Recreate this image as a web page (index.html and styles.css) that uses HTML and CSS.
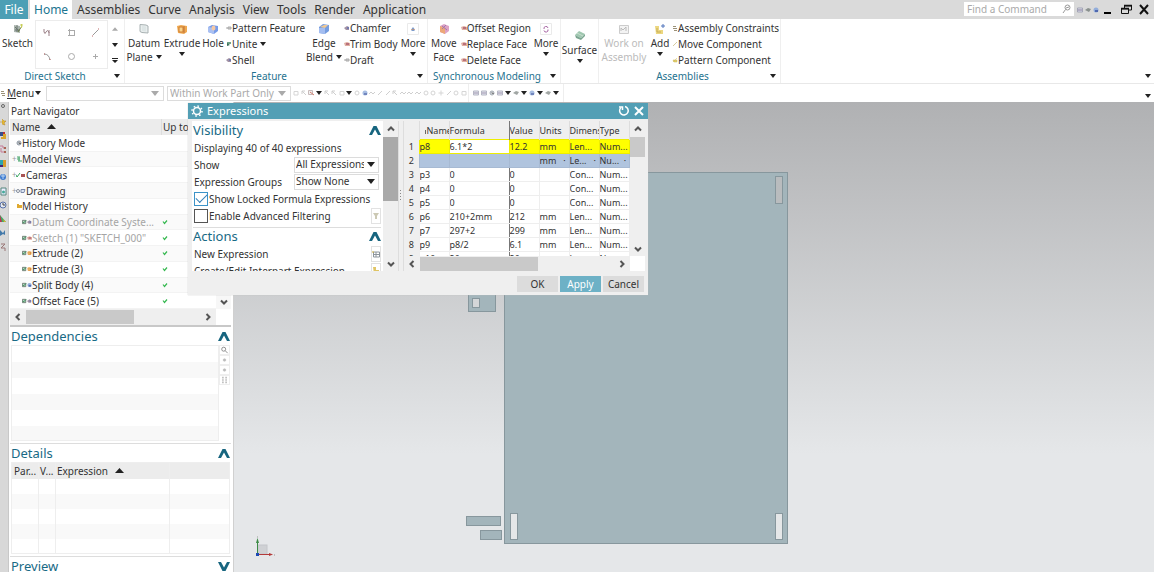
FILE: index.html
```html
<!DOCTYPE html>
<html lang="en">
<head>
<meta charset="utf-8">
<title>Part modeling</title>
<link rel="stylesheet" href="styles.css">
</head>
<body>
<svg class="defs" aria-hidden="true">
  <symbol id="down" viewBox="0 0 6 4"><path d="M0 0h6L3 4z"/></symbol>
  <symbol id="up" viewBox="0 0 9 5"><path d="M0 5h9L4.500 0z"/></symbol>
  <symbol id="chev" viewBox="0 0 12 9"><path d="M0 9L4.500 0h3L12 9H9L6 3.500 3 9z"/></symbol>
  <symbol id="arr" viewBox="0 0 8 8"><path d="M1 5.500L4 2.500l3 3" fill="none" stroke="#555" stroke-width="2"/></symbol>
  <symbol id="sketch" viewBox="0 0 12 12"><path d="M2 2l6 1v7l-6-1z" fill="#aab4ae"/><path d="M3 4l4 4M3 7h5M5 2v7" stroke="#6b7770"/><path d="M6 9l4-6" stroke="#6d7f4a"/><path d="M8 2h3M9.500 1v4" stroke="#c9cf5a"/></symbol>
  <symbol id="plane" viewBox="0 0 12 12"><path d="M2 1.500l6 .5 2 1v7l-6-.5-2-1z" fill="#e9eeee" stroke="#a8b1b2"/><path d="M4 3l4 .5v5l-4-.5z" fill="#dde5e5"/></symbol>
  <symbol id="extrude" viewBox="0 0 12 12"><path d="M1 3l4-1 6 1v6l-3 2-6-1z" fill="#f0a950"/><path d="M3 4h4v5H3z" fill="#f9d48c" stroke="#cf7f33"/><path d="M8 3v7" stroke="#ba7138"/></symbol>
  <symbol id="hole" viewBox="0 0 12 12"><path d="M1 4l4-2 6 1v5l-4 3-6-2z" fill="#789ce8"/><path d="M1 4l6 1v6l-6-2z" fill="#a9c0f2"/><ellipse cx="6.500" cy="5" rx="2" ry="2.500" fill="#f5c8a4"/></symbol>
  <symbol id="blend" viewBox="0 0 12 12"><path d="M1 4l4-3 6 1v6l-4 3-6-1z" fill="#769ddf"/><path d="M1 5h6v6l-6-1z" fill="#a3bdf0"/><path d="M2 4l4-2h4L7 5z" fill="#f0c893"/></symbol>
  <symbol id="face" viewBox="0 0 12 12"><path d="M2 3l4-2 5 2v5l-4 3-5-2z" fill="#dda3c5"/><path d="M2 3l5 2v6l-5-2z" fill="#eda878"/><path d="M4 6l4-4M4 3l5 4" stroke="#a476ad"/></symbol>
  <symbol id="more1" viewBox="0 0 12 12"><path d="M.5.500h11v11H.5z" fill="#fff" stroke="#eaeaea"/><path d="M4.500 6l1.500-2 1.500 2v2h-3z" fill="#7d9ccc"/><path d="M4 6.500h4" stroke="#c98f6a" stroke-width=".6"/></symbol>
  <symbol id="more2" viewBox="0 0 12 12"><path d="M.5.500h11v11H.5z" fill="#fff" stroke="#eaeaea"/><path d="M4 6a2 2 0 0 1 4-1M8 6.500a2 2 0 0 1-4 1" fill="none" stroke="#a765a4"/></symbol>
  <symbol id="surface" viewBox="0 0 12 12"><path d="M1 5l4-4 6 3-4 4z" fill="#9fc7b0"/><path d="M1 5l6 3 4-4v2l-4 4-5-2z" fill="#7ba590"/><path d="M3 3l6 3" stroke="#c7dfcf"/></symbol>
  <symbol id="work" viewBox="0 0 12 12"><path d="M1.500 2.500h9v8h-9z" fill="#f3f3f3" stroke="#ccc"/><path d="M3 8V5l2 2 3-3v4" fill="none" stroke="#bbb"/></symbol>
  <symbol id="add" viewBox="0 0 12 12"><path d="M1 3h4v4h4v4H2z" fill="#ecd780"/><path d="M3 5v4h4" fill="none" stroke="#c5ac5b"/><path d="M7 3h4M9 1v4" stroke="#5277bd"/></symbol>
  <symbol id="s-gray" viewBox="0 0 6 6"><path d="M0 3h2M2 2h3v2H2z" stroke="#aaa" fill="#ccc"/></symbol>
  <symbol id="s-green" viewBox="0 0 6 6"><path d="M1 1h4v2H1z" fill="#6fa287"/><path d="M1 2v3l3-1" fill="#376e59"/></symbol>
  <symbol id="s-shell" viewBox="0 0 6 6"><path d="M0 3l3-2 2 1v3H2z" fill="#a191a4"/><path d="M3 2h2v2H3z" fill="#7379ad"/></symbol>
  <symbol id="s-red" viewBox="0 0 6 6"><path d="M0 2l3-1 3 1v3H1z" fill="#dfaea1"/><path d="M2 2h3v2H2z" fill="#b8707b"/></symbol>
  <symbol id="s-blue" viewBox="0 0 6 6"><circle cx="3" cy="3" r="2.500" fill="#92addb"/><path d="M2 3h3v2H2z" fill="#5068af"/></symbol>
  <symbol id="s-gold" viewBox="0 0 6 6"><path d="M1 5l3-3 1-1M1 3h4v2H2z" fill="#e5d16c" stroke="#cbb65b" stroke-width=".5"/></symbol>
  <symbol id="s-eq" viewBox="0 0 6 6"><path d="M1 1.500h3M1 3.500h4M2 5.500h3" stroke="#9a9178"/></symbol>
  <symbol id="s-pen" viewBox="0 0 6 6"><path d="M1 5l4-4" stroke="#d5cba0"/></symbol>
  <symbol id="s-clock" viewBox="0 0 6 6"><circle cx="3" cy="3" r="2" fill="#d3dae2" stroke="#8b939e"/><path d="M3 2v1.500h2" fill="none" stroke="#666"/></symbol>
  <symbol id="s-view" viewBox="0 0 6 6"><path d="M1 1h3M1 3h3M2 5h4M3 1v4" stroke="#45a469"/></symbol>
  <symbol id="s-cam" viewBox="0 0 10 6"><path d="M0 3l1 2 3-4" fill="none" stroke="#36a35a"/><path d="M5 2h4v3H5z" fill="#a85454"/></symbol>
  <symbol id="s-draw" viewBox="0 0 10 6"><circle cx="2" cy="3" r="1.500" fill="none" stroke="#858d9b"/><path d="M5 1.500h4l-1 3H5z" fill="#dce6f4" stroke="#7c8aa9"/></symbol>
  <symbol id="s-folder" viewBox="0 0 6 6"><path d="M1 1h2v1h3v3H1z" fill="#e0aa31"/></symbol>
  <symbol id="t-box" viewBox="0 0 6 6"><path d="M.5 1h4v4h-4z" fill="#b4d4bf" stroke="#64746a"/><path d="M1 3l1 1 3-3" fill="none" stroke="#25874a"/></symbol>
  <symbol id="tick" viewBox="0 0 6 6"><path d="M1 2.500l1.500 2 2.500-3" fill="none" stroke="#35b84f" stroke-width="1.200"/></symbol>
  <symbol id="m-arrow" viewBox="0 0 6 6"><path d="M1 1l4 4M1 1h3M1 1v3" fill="none" stroke="#c4c4c4"/></symbol>
  <symbol id="m-line" viewBox="0 0 6 6"><path d="M1 5l4-4" stroke="#c4c4c4"/></symbol>
  <symbol id="m-sq" viewBox="0 0 6 6"><path d="M1 1.500h4v3.500H1z" fill="none" stroke="#ccc"/></symbol>
  <symbol id="m-circ" viewBox="0 0 6 6"><circle cx="3" cy="3" r="2" fill="none" stroke="#ccc"/></symbol>
  <symbol id="m-plus" viewBox="0 0 6 6"><path d="M3 .5v5M.5 3h5" stroke="#ccc"/></symbol>
  <symbol id="m-wave" viewBox="0 0 6 6"><path d="M0 4l2-2 2 2 2-2" fill="none" stroke="#c4c4c4"/></symbol>
  <symbol id="m-redbox" viewBox="0 0 6 6"><path d="M.5.500h4v4h-4z" fill="#eee" stroke="#baa"/><path d="M2 2l4 3" stroke="#ca604e"/></symbol>
  <symbol id="m-win" viewBox="0 0 6 6"><path d="M.5 1h5v4h-5z" fill="#dce0eb" stroke="#a3a5b6"/><path d="M1 3h4" stroke="#87799a"/></symbol>
  <symbol id="m-dark" viewBox="0 0 6 6"><path d="M0 3l3-2 3 1-2 3z" fill="#8a918e"/></symbol>
</svg>

<header class="tabs">
  <nav class="tablist">
    <button class="tab file">File</button><button class="tab home">Home</button><button class="tab">Assemblies</button><button class="tab">Curve</button><button class="tab">Analysis</button><button class="tab">View</button><button class="tab">Tools</button><button class="tab">Render</button><button class="tab">Application</button>
  </nav>
  <label class="search"><input type="search" placeholder="Find a Command" aria-label="Find a Command">
    <svg width="9" height="10" viewBox="0 0 9 10" fill="none" stroke="#999"><circle cx="5.500" cy="3.500" r="2.500"/><path d="M3.500 5.500L1 9M4 4l3-1"/></svg></label>
  <div class="status"><svg width="6" height="6"><use href="#m-win"/></svg><svg width="6" height="6"><use href="#m-dark"/></svg><svg width="6" height="6"><use href="#s-blue"/></svg></div>
  <div class="winbtns">
    <button aria-label="Minimize"><svg width="11" height="11" viewBox="0 0 11 11"><path d="M1 8h7v2H1z"/></svg></button>
    <button aria-label="Restore"><svg width="11" height="11" viewBox="0 0 11 11" fill="none" stroke="#111"><path d="M3.500 4V2h7v4H8M.5 5h7v4.500h-7z"/><path d="M3 1.500h8M0 4.500h8" stroke-width="1.500"/></svg></button>
    <button aria-label="Close"><svg width="11" height="11" viewBox="0 0 11 11" stroke="#111" stroke-width="2"><path d="M1 1l8 9M9 1l-8 9"/></svg></button>
  </div>
</header>

<section class="ribbon">
  <div class="group g-sketch">
    <div class="tools">
      <button class="big w35"><svg class="ic"><use href="#sketch"/></svg>Sketch</button>
      <div class="gallery">
        <button aria-label="Profile"><svg viewBox="0 0 9 9"><path d="M1 1v3q1 3 2 0t3 0v4M6 2v3" fill="none" stroke="#9a7f86"/></svg></button>
        <button aria-label="Rectangle"><svg viewBox="0 0 9 9"><path d="M1 2.500h7M1 7.500h7M2.500 1v7M7.500 2v6" fill="none" stroke="#aaa"/></svg></button>
        <button aria-label="Line"><svg viewBox="0 0 9 9"><path d="M2 7l5-5" stroke="#999"/><path d="M1 8h1M7 1h1" stroke="#b66"/></svg></button>
        <button aria-label="Arc"><svg viewBox="0 0 9 9"><path d="M1 2q5 0 6 6" fill="none" stroke="#999"/><path d="M1 2h1M7 7v1" stroke="#b66"/></svg></button>
        <button aria-label="Circle"><svg viewBox="0 0 9 9"><circle cx="4.500" cy="4.500" r="3" fill="none" stroke="#aaa"/></svg></button>
        <button aria-label="Point"><svg viewBox="0 0 9 9"><path d="M4.500 2v5M2 4.500h5" stroke="#aaa"/></svg></button>
      </div>
      <div class="spin"><svg class="dn faint"><use href="#up"/></svg><svg class="dn"><use href="#down"/></svg><svg class="dn bar-dn" viewBox="0 0 6 5"><path d="M0 0h6v1H0zM0 2h6L3 5z"/></svg></div>
    </div>
    <div class="foot"><span>Direct Sketch</span><svg class="dn"><use href="#down"/></svg></div>
  </div>

  <div class="group g-feature">
    <div class="tools">
      <button class="big w38"><svg class="ic"><use href="#plane"/></svg>Datum<span>Plane <svg class="dn"><use href="#down"/></svg></span></button>
      <button class="big w38"><svg class="ic"><use href="#extrude"/></svg>Extrude<svg class="dn"><use href="#down"/></svg></button>
      <button class="big w24"><svg class="ic"><use href="#hole"/></svg>Hole</button>
      <div class="list w80">
        <button><svg class="si"><use href="#s-gray"/></svg>Pattern Feature</button>
        <button><svg class="si"><use href="#s-green"/></svg>Unite <svg class="dn"><use href="#down"/></svg></button>
        <button><svg class="si"><use href="#s-shell"/></svg>Shell</button>
      </div>
      <button class="big w38"><svg class="ic"><use href="#blend"/></svg>Edge<span>Blend <svg class="dn"><use href="#down"/></svg></span></button>
      <div class="list w56">
        <button><svg class="si"><use href="#s-shell"/></svg>Chamfer</button>
        <button><svg class="si"><use href="#s-red"/></svg>Trim Body</button>
        <button><svg class="si"><use href="#s-gray"/></svg>Draft</button>
      </div>
      <button class="big w28"><svg class="ic"><use href="#more1"/></svg>More<svg class="dn"><use href="#down"/></svg></button>
    </div>
    <div class="foot"><span>Feature</span><svg class="dn"><use href="#down"/></svg></div>
  </div>

  <div class="group g-sync">
    <div class="tools">
      <button class="big w32"><svg class="ic"><use href="#face"/></svg>Move<span>Face</span></button>
      <div class="list w73">
        <button><svg class="si"><use href="#s-red"/></svg>Offset Region</button>
        <button><svg class="si"><use href="#s-red"/></svg>Replace Face</button>
        <button><svg class="si"><use href="#s-red"/></svg>Delete Face</button>
      </div>
      <button class="big w28"><svg class="ic"><use href="#more2"/></svg>More<svg class="dn"><use href="#down"/></svg></button>
    </div>
    <div class="foot"><span>Synchronous Modeling</span><svg class="dn"><use href="#down"/></svg></div>
  </div>

  <div class="group g-surface">
    <button class="big low"><svg class="ic"><use href="#surface"/></svg>Surface<svg class="dn"><use href="#down"/></svg></button>
  </div>

  <div class="group g-asm">
    <div class="tools">
      <button class="big w50" disabled><svg class="ic"><use href="#work"/></svg>Work on<span>Assembly</span></button>
      <button class="big w22"><svg class="ic"><use href="#add"/></svg>Add<svg class="dn"><use href="#down"/></svg></button>
      <div class="list w108">
        <button><svg class="si"><use href="#s-eq"/></svg>Assembly Constraints</button>
        <button><svg class="si"><use href="#s-pen"/></svg>Move Component</button>
        <button><svg class="si"><use href="#s-gold"/></svg>Pattern Component</button>
      </div>
    </div>
    <div class="foot"><span>Assemblies</span><svg class="dn"><use href="#down"/></svg></div>
  </div>
  <button class="more-end" aria-label="Ribbon options"><svg class="dn"><use href="#down"/></svg></button>
</section>

<section class="bar">
  <button class="menu"><svg class="si"><use href="#s-eq"/></svg><span><u>M</u>enu</span><svg class="dn"><use href="#down"/></svg></button>
  <div class="combo c1"><select aria-label="Type filter" disabled><option></option></select></div>
  <div class="combo c2"><select aria-label="Selection scope" disabled><option>Within Work Part Only</option></select></div>
  <div class="minis m1">
    <svg><use href="#m-sq"/></svg><svg><use href="#m-arrow"/></svg><svg><use href="#m-redbox"/></svg><svg class="k"><use href="#down"/></svg><svg><use href="#m-arrow"/></svg><svg><use href="#m-arrow"/></svg><svg><use href="#m-sq"/></svg><svg class="k"><use href="#down"/></svg><svg><use href="#m-circ"/></svg><svg><use href="#s-blue"/></svg><svg><use href="#m-wave"/></svg><svg><use href="#m-line"/></svg><svg><use href="#m-line"/></svg><svg><use href="#m-arrow"/></svg><svg><use href="#m-wave"/></svg><svg><use href="#m-wave"/></svg><svg><use href="#m-wave"/></svg><svg><use href="#m-circ"/></svg><svg><use href="#m-circ"/></svg><svg><use href="#m-plus"/></svg><svg><use href="#m-line"/></svg><svg><use href="#m-circ"/></svg><svg><use href="#m-sq"/></svg>
  </div>
  <div class="minis m2">
    <svg><use href="#m-win"/></svg><svg><use href="#m-win"/></svg><svg><use href="#s-clock"/></svg><svg><use href="#m-win"/></svg><svg class="k"><use href="#down"/></svg><svg><use href="#m-dark"/></svg><svg class="k"><use href="#down"/></svg><svg><use href="#s-blue"/></svg><svg class="k"><use href="#down"/></svg><svg><use href="#m-dark"/></svg><svg class="k"><use href="#down"/></svg>
  </div>
  <button class="more-end" aria-label="Toolbar options"><svg class="dn"><use href="#down"/></svg></button>
</section>

<main class="work">
  <nav class="rail" aria-label="Resource bar">
    <svg viewBox="0 0 9 10"><circle cx="3" cy="4" r="1.500" fill="none" stroke="#666"/></svg>
    <svg viewBox="0 0 9 10"><path d="M0 6h3M2 3l2 2 2 0-2 2 1 2-3-1" fill="#e5b934" stroke="#b88d31" stroke-width=".6"/></svg>
    <svg viewBox="0 0 9 10"><path d="M0 2h3v4H0z" fill="#35508f"/><path d="M3 4h3v5H1V7h2z" fill="#d8a52d"/><path d="M3 2h2v2H3z" fill="#b33"/></svg>
    <svg viewBox="0 0 9 10"><path d="M0 2h3v2h3M1 4v4h5" fill="none" stroke="#c47b97"/><path d="M4 3h2v2H4zM4 7h2v2H4z" fill="#a65"/></svg>
    <svg viewBox="0 0 9 10"><path d="M0 2h3v7H0z" fill="#2ba6b0"/><path d="M3 2h3v7H3z" fill="#d59c2c"/><path d="M0 7h3v2H0z" fill="#427"/></svg>
    <svg viewBox="0 0 9 10"><circle cx="3" cy="5" r="3" fill="#3d7bd0"/><path d="M1 4h4M3 2v5" stroke="#b9d4f1"/></svg>
    <svg viewBox="0 0 9 10"><path d="M1 2h5v7H1z" fill="#eef" stroke="#57877f"/><circle cx="3.500" cy="6" r="1.500" fill="#4a9"/></svg>
    <svg viewBox="0 0 9 10"><circle cx="3" cy="5" r="3" fill="#e4e9f2" stroke="#5771a8"/><path d="M3 3v2h2" fill="none" stroke="#444"/></svg>
    <svg viewBox="0 0 9 10"><path d="M0 1l6 7H0z" fill="#4a6"/><path d="M0 1l2 7H0z" fill="#b35"/><path d="M3 5l3 3H4z" fill="#e1b02b"/></svg>
    <svg viewBox="0 0 9 10"><path d="M0 2l3 3 2-3v5L3 6 0 8z" fill="#4379a9"/></svg>
    <svg viewBox="0 0 9 10"><path d="M1 2h4L1 6h4v3" fill="none" stroke="#9a7776"/></svg>
  </nav>

  <aside class="panel">
    <div class="ptitle">Part Navigator</div>
    <div class="nav">
      <div class="phead"><span>Name <svg class="sort"><use href="#up"/></svg></span><span>Up to</span></div>
      <ul class="tree">
        <li><span class="n"><svg class="si"><use href="#s-clock"/></svg>History Mode</span><span></span></li>
        <li><span class="n p"><svg class="si"><use href="#s-view"/></svg>Model Views</span><span></span></li>
        <li><span class="n p"><svg class="si2"><use href="#s-cam"/></svg>Cameras</span><span></span></li>
        <li><span class="n p"><svg class="si2"><use href="#s-draw"/></svg>Drawing</span><span></span></li>
        <li><span class="n"><svg class="si"><use href="#s-folder"/></svg>Model History</span><span></span></li>
        <li class="dim"><span class="n c"><svg class="ti"><use href="#t-box"/></svg><svg class="ti"><use href="#s-shell"/></svg>Datum Coordinate Syste...</span><span><svg class="si"><use href="#tick"/></svg></span></li>
        <li class="dim"><span class="n c"><svg class="ti"><use href="#t-box"/></svg><svg class="ti"><use href="#s-red"/></svg>Sketch (1) "SKETCH_000"</span><span><svg class="si"><use href="#tick"/></svg></span></li>
        <li><span class="n c"><svg class="ti"><use href="#t-box"/></svg><svg class="ti"><use href="#extrude"/></svg>Extrude (2)</span><span><svg class="si"><use href="#tick"/></svg></span></li>
        <li><span class="n c"><svg class="ti"><use href="#t-box"/></svg><svg class="ti"><use href="#extrude"/></svg>Extrude (3)</span><span><svg class="si"><use href="#tick"/></svg></span></li>
        <li><span class="n c"><svg class="ti"><use href="#t-box"/></svg><svg class="ti"><use href="#s-blue"/></svg>Split Body (4)</span><span><svg class="si"><use href="#tick"/></svg></span></li>
        <li><span class="n c"><svg class="ti"><use href="#t-box"/></svg><svg class="ti"><use href="#s-shell"/></svg>Offset Face (5)</span><span><svg class="si"><use href="#tick"/></svg></span></li>
      </ul>
      <div class="vs"><svg class="a d"><use href="#arr"/></svg></div>
      <div class="hs"><svg class="a l"><use href="#arr"/></svg><i class="thumb t1"></i><svg class="a r"><use href="#arr"/></svg></div>
    </div>

    <section class="sec first">
      <h2>Dependencies <svg class="ch"><use href="#chev"/></svg></h2>
      <div class="deps">
        <div class="stripes"></div>
        <div class="side">
          <button aria-label="Find"><svg viewBox="0 0 10 10" fill="none" stroke="#777"><circle cx="4" cy="4" r="2.500"/><path d="M6 6l3 3"/></svg></button>
          <button aria-label="Expand"><svg viewBox="0 0 10 10"><path d="M3 5h4M5 3v4" stroke="#bbb" stroke-width="2"/></svg></button>
          <button aria-label="Collapse"><svg viewBox="0 0 10 10"><path d="M3 5h4M5 3v4" stroke="#bbb" stroke-width="2"/></svg></button>
          <button aria-label="Columns"><svg viewBox="0 0 10 10"><path d="M3 1v8M7 1v8" stroke="#bbb" stroke-width="2" stroke-dasharray="2 1"/></svg></button>
        </div>
      </div>
    </section>
    <section class="sec">
      <h2>Details <svg class="ch"><use href="#chev"/></svg></h2>
      <table class="details">
        <thead><tr><th>Par...</th><th>V...</th><th>Expression <svg class="sort"><use href="#up"/></svg></th><th></th></tr></thead>
        <tbody><tr><td></td><td></td><td></td><td></td></tr><tr><td></td><td></td><td></td><td></td></tr><tr><td></td><td></td><td></td><td></td></tr><tr><td></td><td></td><td></td><td></td></tr><tr><td></td><td></td><td></td><td></td></tr></tbody>
      </table>
    </section>
    <section class="sec">
      <h2>Preview <svg class="ch flip"><use href="#chev"/></svg></h2>
    </section>
  </aside>

  <div class="canvas">
    <svg class="scene" width="600" height="470" viewBox="233 102 600 470" aria-label="Model view">
      <g fill="#a3b5bb" stroke="#87979d">
        <rect x="503.500" y="172.500" width="283" height="371"/>
        <rect x="467.500" y="280.500" width="27" height="31"/>
        <rect x="465.500" y="516.500" width="34" height="9"/>
        <rect x="479.500" y="530.500" width="21" height="9"/>
      </g>
      <g stroke="#87979d">
        <rect x="471.500" y="298.500" width="7" height="9" fill="#d4d6d8"/>
        <rect x="774.500" y="176.500" width="7" height="27" fill="#b9bcbe"/>
        <rect x="509.500" y="513.500" width="7" height="26" fill="#e5e7e8"/>
        <rect x="774.500" y="513.500" width="7" height="26" fill="#e5e7e8"/>
      </g>
      <rect x="257" y="545" width="9" height="9" fill="#cfd1d4" stroke="#c4c6ca"/>
      <path d="M256.500 554v-14" stroke="#3d8b46"/><path d="M255 543l1.500-5 1.500 5z" fill="#3d8b46"/>
      <path d="M256 554.500h13" stroke="#b33a3a"/><path d="M268 553l4 1.500-4 1.500z" fill="#b33a3a"/>
      <rect x="255" y="553" width="3" height="3" fill="#1d4bb5"/>
      <path d="M273 555h1M256 537h1" stroke="#999"/>
    </svg>
  </div>

  <div class="dialog" role="dialog" aria-label="Expressions">
    <div class="dtitle">
      <svg width="12" height="12" viewBox="0 0 12 12" fill="none" stroke="#fff"><circle cx="6" cy="6" r="3.500" stroke-width="1.500"/><circle cx="6" cy="6" r="5" stroke-width="1.500" stroke-dasharray="1.600 2.300"/></svg>
      <span>Expressions</span>
      <button aria-label="Reset"><svg width="12" height="12" viewBox="0 0 12 12" fill="none" stroke="#fff" stroke-width="1.500"><path d="M3 2.500a4.300 4.300 0 1 0 4-1"/><path d="M1 2h3.500v3"/></svg></button>
      <button aria-label="Close"><svg width="10" height="10" viewBox="0 0 10 10" stroke="#fff" stroke-width="2"><path d="M1 1l8 8M9 1l-8 8"/></svg></button>
    </div>
    <div class="dbody">
      <div class="opts">
        <h2>Visibility <svg class="ch"><use href="#chev"/></svg></h2>
        <div class="row">Displaying 40 of 40 expressions</div>
        <div class="row"><label for="show">Show</label><div class="combo dk"><select id="show"><option>All Expressions</option></select></div></div>
        <div class="row"><label for="grp">Expression Groups</label><div class="combo dk"><select id="grp"><option>Show None</option></select></div></div>
        <div class="row"><label class="chk"><input type="checkbox" checked>Show Locked Formula Expressions</label></div>
        <div class="row"><label class="chk"><input type="checkbox">Enable Advanced Filtering</label><button class="sq" aria-label="Filter"><svg viewBox="0 0 8 14"><path d="M1 4h6L5 7v3H3V7z" fill="#ccc9b4"/></svg></button></div>
        <h2 class="ln">Actions <svg class="ch"><use href="#chev"/></svg></h2>
        <div class="row">New Expression<button class="sq" aria-label="New expression"><svg viewBox="0 0 8 14"><path d="M1.500 5h6v5h-6zM1 7.500h6M4 5v5" fill="none" stroke="#8c949c"/><path d="M0 5h2" stroke="#c7ab3c"/></svg></button></div>
        <div class="row">Create/Edit Interpart Expression<button class="sq" aria-label="Interpart expression"><svg viewBox="0 0 8 14"><path d="M1 3h3v3h3v4H2z" fill="#e0c566"/></svg></button></div>
      </div>
      <div class="ovs"><svg class="a u"><use href="#arr"/></svg><i class="vthumb"></i><i class="grow"></i><svg class="a d"><use href="#arr"/></svg></div>
      <div class="split"><svg width="2" height="12" viewBox="0 0 2 12" fill="#888"><path d="M0 0h1v1H0zM0 3h1v1H0zM0 6h1v1H0zM0 9h1v1H0z"/></svg></div>
      <div class="grid">
        <div class="clip">
        <table class="expr">
          <colgroup><col class="c-i"><col class="c-n"><col class="c-f"><col class="c-v"><col class="c-v"><col class="c-v"><col class="c-t"></colgroup>
          <thead><tr><th></th><th class="nm"><svg width="3" height="5" viewBox="0 0 3 5"><path d="M1 1h1v4H1z" fill="#666"/></svg>Name</th><th>Formula</th><th>Value</th><th>Units</th><th>Dimens</th><th>Type</th></tr></thead>
          <tbody>
            <tr class="yel"><th>1</th><td>p8</td><td class="edit">6.1*2</td><td>12.2</td><td>mm</td><td>Len...</td><td>Num...</td></tr>
            <tr class="sel"><th>2</th><td></td><td></td><td></td><td>mm&nbsp;&nbsp; ·</td><td>Le...&nbsp;&nbsp; ·</td><td>Nu...&nbsp; ·</td></tr>
            <tr><th>3</th><td>p3</td><td>0</td><td>0</td><td></td><td>Con...</td><td>Num...</td></tr>
            <tr><th>4</th><td>p4</td><td>0</td><td>0</td><td></td><td>Con...</td><td>Num...</td></tr>
            <tr><th>5</th><td>p5</td><td>0</td><td>0</td><td></td><td>Con...</td><td>Num...</td></tr>
            <tr><th>6</th><td>p6</td><td>210+2mm</td><td>212</td><td>mm</td><td>Len...</td><td>Num...</td></tr>
            <tr><th>7</th><td>p7</td><td>297+2</td><td>299</td><td>mm</td><td>Len...</td><td>Num...</td></tr>
            <tr><th>8</th><td>p9</td><td>p8/2</td><td>6.1</td><td>mm</td><td>Len...</td><td>Num...</td></tr>
            <tr><th>9</th><td>p10</td><td>20</td><td>20</td><td>mm</td><td>Len...</td><td>Num...</td></tr>
          </tbody>
        </table>
        </div>
        <div class="gvs"><svg class="a u"><use href="#arr"/></svg><i class="vthumb"></i><i class="grow"></i><svg class="a d"><use href="#arr"/></svg></div>
        <div class="hs"><svg class="a l"><use href="#arr"/></svg><i class="thumb t2"></i><svg class="a r"><use href="#arr"/></svg></div>
        <div class="corner"></div>
      </div>
    </div>
    <div class="dfoot"><button>OK</button><button class="pri">Apply</button><button>Cancel</button></div>
  </div>
</main>
</body>
</html>
```
FILE: styles.css
```css
* { box-sizing: border-box; }
body {
  margin: 0; height: 100vh; overflow: hidden;
  display: flex; flex-direction: column;
  font: 10px/14px "Noto Sans", "Open Sans", sans-serif;
  color: #333; background: #fff;
}
button { font: inherit; color: inherit; background: none; border: 0; padding: 0; margin: 0; white-space: nowrap; }
input, select { font: inherit; color: inherit; margin: 0; }
svg { flex: none; }
ul { list-style: none; margin: 0; padding: 0; }
h2 {
  margin: 0; font-size: 13px; font-weight: 400; line-height: 17px; color: #186a85;
  display: flex; align-items: center; justify-content: space-between;
}
.defs { position: absolute; width: 0; height: 0; }
.dn { width: 6px; height: 4px; fill: #222; }
.dn.faint { fill: #aaa; }
.dn.bar-dn { height: 5px; }
.ch { width: 12px; height: 9px; fill: #17657f; }
.ch.flip { transform: rotate(180deg); }
.sort { width: 9px; height: 5px; fill: #222; vertical-align: 2px; }

/* tab strip */
.tabs { display: flex; align-items: stretch; height: 19px; background: #dadada; flex: none; }
.tablist { display: flex; flex: 1; gap: 2px; }
.tab { font-size: 12px; line-height: 19px; padding: 0 3px; }
.tab.file { background: #4d9fb5; color: #fff; padding: 0 4px; width: 28px; }
.tab.home { background: #fff; color: #1b7590; width: 42px; padding: 0 4px; }
.search { display: flex; align-items: center; background: #fff; width: 110px; margin: 2px 0 3px; padding: 0 3px; }
.search input { flex: 1; width: 0; min-width: 0; border: 0; padding: 0; outline: 0; background: none; appearance: none; height: 14px; }
.search input::placeholder { color: #aaa; opacity: 1; }
.status { display: flex; gap: 2px; align-items: center; padding: 0 4px 0 3px; }
.winbtns { display: flex; gap: 7px; align-items: center; padding-right: 4px; }
.winbtns button { display: flex; }

/* ribbon */
.ribbon { display: flex; height: 65px; border-bottom: 1px solid #e8e8e8; flex: none; }
.group { display: flex; flex-direction: column; border-right: 1px solid #efefef; }
.g-sketch { width: 125px; }
.g-feature { width: 303px; }
.g-sync { width: 133px; }
.g-surface { width: 38px; }
.g-asm { width: 182px; }
.tools { display: flex; height: 51px; }
.foot { position: relative; display: flex; align-items: center; justify-content: center; height: 12px; color: #1f7390; padding-right: 14px; }
.foot .dn { position: absolute; right: 4px; }
.big { display: flex; flex-direction: column; align-items: center; padding-top: 4px; }
.big .ic { margin-bottom: 1px; }
.big > .dn { margin-top: 2px; }
.big span { display: flex; align-items: center; gap: 3px; }
.big:disabled { color: #bbb; }
.big.low { padding-top: 11px; }
.ic { width: 12px; height: 12px; }
.si { width: 6px; height: 6px; }
.si2 { width: 10px; height: 6px; }
.ti { width: 5px; height: 6px; }
.w22 { width: 22px; } .w24 { width: 24px; } .w28 { width: 28px; } .w32 { width: 32px; }
.w35 { width: 35px; } .w38 { width: 38px; } .w50 { width: 50px; }
.w56 { width: 56px; } .w73 { width: 73px; } .w80 { width: 80px; } .w108 { width: 108px; }
.list { display: flex; flex-direction: column; gap: 2px; padding: 2px 0 0 1px; }
.list button { display: flex; align-items: center; text-align: left; }
.list .dn { margin-left: 3px; }
.gallery { display: grid; grid-template-columns: repeat(3, 1fr); width: 73px; margin: 1px 0; border: 1px solid #ececec; }
.gallery button { display: flex; align-items: center; justify-content: center; }
.gallery svg { width: 9px; height: 9px; }
.spin { display: flex; flex-direction: column; justify-content: space-between; align-items: center; width: 14px; padding: 8px 0 7px; }
.more-end { margin-left: auto; width: 12px; display: flex; justify-content: center; align-items: flex-end; padding-bottom: 5px; }

/* selection bar */
.bar { display: flex; align-items: center; height: 18px; flex: none; }
.menu { display: flex; align-items: center; gap: 1px; width: 46px; }
.combo { position: relative; display: flex; height: 15px; border: 1px solid #dcdcdc; color: #aaa; }
.combo select { appearance: none; width: 100%; border: 0; padding: 0 14px 0 2px; background: none; color: inherit; line-height: 13px; opacity: 1; }
.combo::after {
  content: ""; position: absolute; right: 4px; top: 4px;
  border: 4px solid transparent; border-top: 5px solid #aaa; border-bottom: 0;
}
.combo.dk { color: #333; width: 85px; margin-right: 2px; }
.combo.dk select { padding-left: 1px; }
.combo.dk::after { border-top-color: #222; right: 3px; }
.c1 { width: 118px; }
.c2 { width: 124px; margin-left: 3px; }
.minis { display: flex; align-items: center; justify-content: space-between; }
.minis svg { width: 6px; height: 6px; opacity: .8; }
.minis .k { width: 6px; height: 4px; fill: #222; opacity: 1; }
.m1 { width: 175px; margin-left: 2px; padding-right: 1px; }
.m2 { width: 96px; padding: 0 4px; border-left: 1px solid #eee; border-right: 1px solid #eee; height: 100%; }
.bar .more-end { height: 100%; padding-bottom: 4px; }

/* work area */
.work { position: relative; display: flex; flex: 1; min-height: 0; }
.rail { width: 9px; background: #d8d8d8; border-right: 1px solid #c8c8c8; display: flex; flex-direction: column; gap: 4px; }
.rail svg { width: 9px; height: 10px; }
.panel { width: 225px; background: #fff; border-right: 1px solid #d0d0d0; padding: 0 2px 0 1px; }
.ptitle { height: 17px; line-height: 18px; padding-left: 1px; }
.nav { display: grid; grid-template-columns: 1fr 15px; border-bottom: 2px solid #c8c8c8; }
.phead { grid-column: 1 / 3; display: grid; grid-template-columns: 149px 1fr; height: 16px; line-height: 16px; background: #ececec; padding-left: 2px; }
.phead span + span { border-left: 1px solid #ddd; padding-left: 1px; }
.phead .sort { margin-left: 4px; }
.tree { display: grid; grid-auto-rows: 1fr; height: 174px; padding-top: 1px; }
.tree li { display: grid; grid-template-columns: 150px 1fr; border-bottom: 1px solid #f3f3f3; min-height: 0; align-items: center; padding-left: 1px; }
.tree li:nth-child(even) { background: #fafafa; }
.tree .n { display: flex; align-items: center; padding-left: 5px; white-space: nowrap; }
.tree .n.p { padding-left: 1px; }
.tree .n.p::before { content: "+"; width: 4px; font-size: 8px; color: #999; }
.tree .n.c { padding-left: 11px; }
.tree li > span + span { display: flex; padding-left: 1px; }
.dim { color: #a5a5a5; }
.vs { background: #f7f7f7; display: flex; align-items: flex-end; justify-content: center; padding-bottom: 3px; }
.hs { display: flex; align-items: center; justify-content: space-between; height: 16px; background: #efefef; padding: 0 4px; }
.nav .hs { grid-column: 1; }
.a { width: 8px; height: 8px; }
.a.d { transform: rotate(180deg); }
.a.l { transform: rotate(-90deg); }
.a.r { transform: rotate(90deg); }
.thumb { height: 14px; background: #c9c9c9; margin-right: auto; margin-left: 4px; }
.t1 { width: 108px; }
.t2 { width: 118px; }
.sec { border-bottom: 1px solid #ddd; padding: 1px 1px 2px; }
.deps { display: flex; }
.stripes { flex: 1; height: 96px; border: 1px solid #eee; background: repeating-linear-gradient(#fff 0 16px, #f8f8f8 16px 32px); }
.side { width: 11px; display: flex; flex-direction: column; }
.side button { display: flex; height: 10px; border: 1px solid #eee; }
.side svg { width: 9px; height: 8px; }
.details { border-collapse: collapse; table-layout: fixed; width: 100%; border: 1px solid #eee; }
.details th { font-weight: 400; text-align: left; height: 16px; padding: 0 0 0 2px; background: #ececec; line-height: 14px; white-space: nowrap; }
.details th:nth-child(1) { width: 27px; }
.details th:nth-child(2) { width: 17px; padding-left: 1px; }
.details th:nth-child(3) { width: 114px; padding-left: 1px; }
.details .sort { margin-left: 4px; }
.details td { height: 15px; padding: 0; }
.details th, .details td { border-right: 1px solid #eee; }
.details tr:nth-child(even) td { background: #f9f9f9; }
.canvas { flex: 1; min-width: 0; overflow: hidden; background: linear-gradient(#b0b1b3, #e5e7e9 75%); }
.scene { display: block; }

/* expressions dialog */
.dialog { position: absolute; left: 188px; top: 1px; width: 460px; background: #efefef; box-shadow: 0 0 1px #bbb; }
.dtitle { display: flex; align-items: center; height: 16px; background: #539fb5; color: #fff; padding: 0 4px 0 3px; gap: 4px; font-size: 11px; }
.dtitle span { flex: 1; }
.dtitle button { display: flex; }
.dbody { display: flex; height: 150px; margin: 2px 3px 0 4px; }
.opts { width: 191px; background: #fff; overflow: hidden; padding: 1px 2px 0 1px; }
.opts .row { display: flex; align-items: center; justify-content: space-between; height: 17px; white-space: nowrap; padding-left: 1px; }
.opts .row .combo { height: 16px; }
.opts .ln { border-top: 1px solid #ddd; margin-top: 3px; }
.chk { display: flex; align-items: center; gap: 1px; }
.chk input { appearance: none; width: 14px; height: 14px; border: 1px solid #555; background: #fff; }
.chk input:checked { border-color: #3c93c8; display: grid; place-items: center; }
.chk input:checked::after { content: ""; width: 10px; height: 5px; border: solid #3581b8; border-width: 0 0 1px 1px; transform: rotate(-45deg); margin-bottom: 3px; }
.sq { display: flex; width: 10px; height: 16px; border: 1px solid #e2e2e2; }
.sq svg { width: 8px; height: 14px; }
.ovs, .gvs { width: 15px; display: flex; flex-direction: column; align-items: center; padding: 4px 0 3px; background: #efefef; }
.vthumb { width: 15px; height: 64px; margin-top: 4px; background: #a9a9a9; }
.gvs .vthumb { height: 20px; background: #c9c9c9; }
.grow { flex: 1; }
.split { width: 6px; border: solid #ddd; border-width: 0 1px; display: flex; align-items: center; justify-content: center; }
.grid { flex: 1; display: grid; grid-template: 135px 15px / 1fr 15px; }
.clip { overflow: hidden; }
.grid .hs { height: 15px; }
.corner { background: #fff; }
.expr { border-collapse: collapse; table-layout: fixed; width: 100%; font-size: 9px; line-height: 13px; background: #fff; }
.c-i { width: 15px; } .c-n { width: 30px; } .c-f { width: 60px; } .c-v { width: 30px; }
.expr th { font-weight: 400; background: #efefef; padding: 0; }
.expr thead th { height: 18px; text-align: left; overflow: hidden; white-space: nowrap; border-right: 1px solid #ddd; padding-top: 2px; }
.expr thead .nm { padding-left: 4px; }
.expr tbody tr { height: 14px; }
.expr td { height: 14px; padding: 0; border: 1px solid #eee; overflow: hidden; white-space: nowrap; }
.expr tr > :nth-child(3) { border-right: 1px solid #777; }
.expr .yel td { background: #ff0; border-color: #ee0; }
.expr .sel td { background: #b0c4de; border-color: #a7bad3; }
.expr .yel .edit { background: #fff; }
.dfoot { display: flex; justify-content: flex-end; gap: 2px; padding: 5px 4px 3px; }
.dfoot button { width: 41px; height: 16px; background: #dcdcdc; }
.dfoot .pri { background: #6db1c6; color: #fff; }
```
